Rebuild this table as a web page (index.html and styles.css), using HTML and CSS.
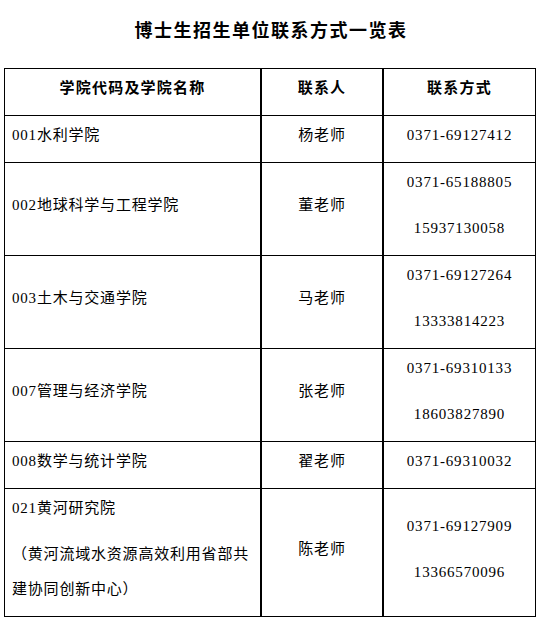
FILE: index.html
```html
<!DOCTYPE html>
<html lang="zh">
<head>
<meta charset="utf-8">
<title>博士生招生单位联系方式一览表</title>
<link rel="stylesheet" href="styles.css">
</head>
<body>
<div class="page">
  <h1 class="title">博士生招生单位联系方式一览表</h1>
  <table class="contacts">
    <colgroup>
      <col class="w1"><col class="w2"><col class="w3">
    </colgroup>
    <thead>
      <tr>
        <th class="c1"><p>学院代码及学院名称</p></th>
        <th class="c2"><p>联系人</p></th>
        <th class="c3"><p>联系方式</p></th>
      </tr>
    </thead>
    <tbody>
      <tr>
        <td class="c1"><p>001水利学院</p></td>
        <td class="c2"><p>杨老师</p></td>
        <td class="c3"><p>0371-69127412</p></td>
      </tr>
      <tr>
        <td class="c1"><p>002地球科学与工程学院</p></td>
        <td class="c2"><p>董老师</p></td>
        <td class="c3"><p>0371-65188805</p><p>15937130058</p></td>
      </tr>
      <tr>
        <td class="c1"><p>003土木与交通学院</p></td>
        <td class="c2"><p>马老师</p></td>
        <td class="c3"><p>0371-69127264</p><p>13333814223</p></td>
      </tr>
      <tr>
        <td class="c1"><p>007管理与经济学院</p></td>
        <td class="c2"><p>张老师</p></td>
        <td class="c3"><p>0371-69310133</p><p>18603827890</p></td>
      </tr>
      <tr>
        <td class="c1"><p>008数学与统计学院</p></td>
        <td class="c2"><p>翟老师</p></td>
        <td class="c3"><p>0371-69310032</p></td>
      </tr>
      <tr>
        <td class="c1"><p>021黄河研究院</p><p>（黄河流域水资源高效利用省部共建协同创新中心）</p></td>
        <td class="c2"><p>陈老师</p></td>
        <td class="c3"><p>0371-69127909</p><p>13366570096</p></td>
      </tr>
    </tbody>
  </table>
</div>
</body>
</html>
```

FILE: styles.css
```css
html, body {
  margin: 0;
  padding: 0;
  background: #fff;
}

body {
  font-family: "Liberation Serif", "Noto Sans CJK SC", serif;
  color: #000;
}

.page {
  padding: 0 4px;
}

.title {
  margin: 0 0 19px;
  padding-top: 13px;
  font-size: 18px;
  line-height: 36px;
  font-weight: bold;
  letter-spacing: 1.5px;
  text-align: center;
}

.contacts {
  width: 532px;
  table-layout: fixed;
  border-collapse: separate;
  border-spacing: 0;
  border-top: 1px solid #000;
  border-left: 1px solid #000;
}

.w1 { width: 257px; }
.w2 { width: 122px; }
.w3 { width: 152px; }

.contacts th,
.contacts td {
  padding: 0;
  border-right: 1px solid #000;
  border-bottom: 1px solid #000;
  vertical-align: middle;
  font-size: 15px;
  letter-spacing: 0.8px;
}

.contacts th.c1,
.contacts td.c1,
.contacts th.c2,
.contacts td.c2 {
  border-right-width: 2px;
}

.contacts th {
  font-weight: bold;
  letter-spacing: 1.2px;
  text-align: center;
  vertical-align: top;
}

.contacts p {
  margin: 0 0 9px;
  padding-top: 2px;
  line-height: 35px;
}

.contacts td.c1 {
  text-align: left;
  padding: 0 7px;
}

.contacts td.c2,
.contacts td.c3 {
  text-align: center;
}
```
